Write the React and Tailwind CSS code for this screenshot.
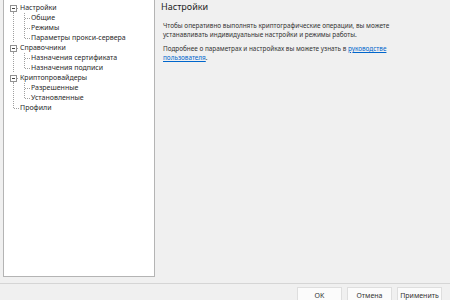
import React from "react";

const LINE = "#a0a0a0";

// gutter drawing for one tree row (connector lines + expander box)
function Gutter({ kind, last, more }) {
  const dot = { stroke: LINE, strokeWidth: 1, strokeDasharray: "1 1", shapeRendering: "crispEdges" };
  if (kind === "root") {
    return (
      <svg width="16" height="10" className="shrink-0">
        {more && <line x1="9.5" y1="9" x2="9.5" y2="10" style={dot} />}
        <line x1="13" y1="5.5" x2="15" y2="5.5" style={dot} />
        <rect x="6.5" y="2.5" width="6" height="6" fill="#fff" stroke="#919191" shapeRendering="crispEdges" />
        <line x1="8" y1="5.5" x2="11" y2="5.5" stroke="#404040" shapeRendering="crispEdges" />
      </svg>
    );
  }
  if (kind === "leafRoot") {
    return (
      <svg width="16" height="10" className="shrink-0">
        <line x1="9.5" y1="0" x2="9.5" y2="5.5" style={dot} />
        <line x1="10" y1="5.5" x2="15" y2="5.5" style={dot} />
      </svg>
    );
  }
  // child row
  return (
    <svg width="27" height="10" className="shrink-0">
      {more && <line x1="9.5" y1="0" x2="9.5" y2="10" style={dot} />}
      <line x1="20.5" y1="0" x2="20.5" y2={last ? 5.5 : 10} style={dot} />
      <line x1="21" y1="5.5" x2="26" y2="5.5" style={dot} />
    </svg>
  );
}

const tree = [
  { label: "Настройки", children: ["Общие", "Режимы", "Параметры прокси-сервера"] },
  { label: "Справочники", children: ["Назначения сертификата", "Назначения подписи"] },
  { label: "Криптопровайдеры", children: ["Разрешенные", "Установленные"] },
  { label: "Профили", children: [] },
];

export default function App() {
  return (
    <div
      className="w-[450px] h-[300px] overflow-hidden bg-[#f0f0f0] flex flex-col text-[#1e1e1e]"
      style={{ fontFamily: '"Noto Sans", "Open Sans", sans-serif' }}
    >
      <div className="flex h-[277px] shrink-0">
        {/* tree */}
        <div className="ml-[3px] w-[152px] h-full bg-white border-l border-r border-b border-[#b4b4b4] pt-[3px] text-[7px] leading-[10px] text-[#2a2a2a]">
          {tree.map((node, i) => {
            const more = i < tree.length - 1;
            return (
              <div key={node.label}>
                <div className="flex h-[10px] items-center">
                  <Gutter kind={node.children.length ? "root" : "leafRoot"} more={more} />
                  <span className="whitespace-nowrap">{node.label}</span>
                </div>
                {node.children.map((c, j) => (
                  <div key={c} className="flex h-[10px] items-center">
                    <Gutter kind="child" more={more} last={j === node.children.length - 1} />
                    <span className="whitespace-nowrap">{c}</span>
                  </div>
                ))}
              </div>
            );
          })}
        </div>

        {/* content */}
        <div className="flex-1 pl-[6px] pr-2 pt-[1px]">
          <div className="text-[9px] leading-[12px] text-[#1e1e1e]">Настройки</div>
          <div className="pl-[2px] mt-[9px] text-[6.4px] leading-[8.5px] text-[#333] w-[245px]">
            <p>
              Чтобы оперативно выполнять криптографические операции, вы можете устанавливать
              индивидуальные настройки и режимы работы.
            </p>
            <p className="mt-[6px]">
              Подробнее о параметрах и настройках вы можете узнать в{" "}
              <span className="text-[#0066cc] underline">руководстве</span>
              <br />
              <span className="text-[#0066cc] underline">пользователя</span>.
            </p>
          </div>
        </div>
      </div>

      <div className="mt-[6px] h-px bg-[#d5d5d5] shrink-0" />

      <div className="flex justify-end gap-[5px] pt-[3px] pr-[8px] shrink-0">
        {["OK", "Отмена", "Применить"].map((b) => (
          <button
            key={b}
            className="w-[45px] h-[20px] bg-[#fbfbfb] border border-[#dedede] text-[7px] text-[#333] flex items-start justify-center pt-[3px]"
          >
            {b}
          </button>
        ))}
      </div>
    </div>
  );
}
